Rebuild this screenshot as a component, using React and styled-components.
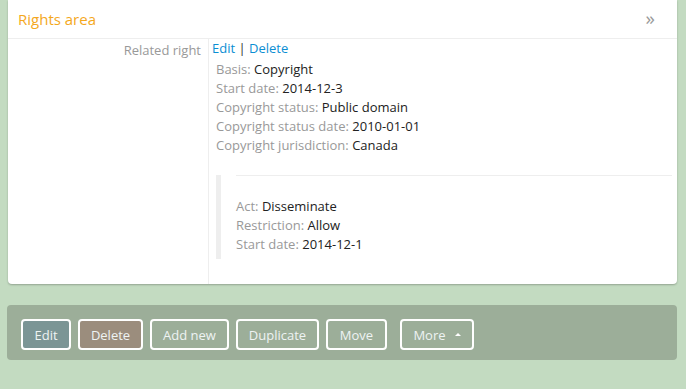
import React from "react";
import styled, { createGlobalStyle } from "styled-components";

const GlobalStyle = createGlobalStyle`
  html, body {
    margin: 0;
    padding: 0;
    background: #c3dbc1;
    font-family: "Open Sans", "Noto Sans", sans-serif;
    font-size: 13px;
  }
`;

const details = [
  ["Basis", "Copyright"],
  ["Start date", "2014-12-3"],
  ["Copyright status", "Public domain"],
  ["Copyright status date", "2010-01-01"],
  ["Copyright jurisdiction", "Canada"],
];

const grant = [
  ["Act", "Disseminate"],
  ["Restriction", "Allow"],
  ["Start date", "2014-12-1"],
];

const actions = [
  { label: "Edit", tone: "edit", width: 50 },
  { label: "Delete", tone: "delete", width: 65 },
  { label: "Add new", width: 79 },
  { label: "Duplicate", width: 83 },
  { label: "Move", width: 61 },
];

const App = () => {
  return (
    <Page>
      <GlobalStyle />
      <Card>
        <CardHeader>
          <Title>Rights area</Title>
          <Toggle>»</Toggle>
        </CardHeader>
        <FieldRow>
          <Label>Related right</Label>
          <Value>
            <Links>
              <Link>Edit</Link> | <Link>Delete</Link>
            </Links>
            <DetailList>
              {details.map(([k, v]) => (
                <Line key={k}>
                  <Key>{k}:</Key> {v}
                </Line>
              ))}
            </DetailList>
            <Quote>
              <Rule />
              {grant.map(([k, v]) => (
                <Line key={k}>
                  <Key>{k}:</Key> {v}
                </Line>
              ))}
            </Quote>
          </Value>
        </FieldRow>
      </Card>
      <ActionBar>
        {actions.map((a) => (
          <Button key={a.label} tone={a.tone} $w={a.width}>
            {a.label}
          </Button>
        ))}
        <MoreButton $w={74}>
          More <Caret />
        </MoreButton>
      </ActionBar>
    </Page>
  );
};

export default App;

const Page = styled.div`
  padding: 0 9px 0 7px;
`;

const Card = styled.section`
  margin-left: 1px;
  background: #fff;
  border-radius: 0 0 4px 4px;
  box-shadow: 0 1px 2px rgba(0, 0, 0, 0.25);
  color: #333;
`;

const CardHeader = styled.div`
  height: 39px;
  display: flex;
  align-items: center;
  justify-content: space-between;
  padding: 0 22px 0 10px;
  border-bottom: 1px solid #eee;
  box-sizing: border-box;
`;

const Title = styled.h3`
  margin: 0;
  font-size: 15px;
  font-weight: normal;
  color: #f4a81d;
`;

const Toggle = styled.span`
  font-size: 19px;
  color: #9a9a9a;
  line-height: 1;
  margin-top: -2px;
`;

const FieldRow = styled.div`
  display: grid;
  grid-template-columns: 201px 1fr;
`;

const Label = styled.div`
  border-right: 1px solid #eee;
  text-align: right;
  padding: 2px 7px 0 0;
  line-height: 19px;
  color: #999;
`;

const Value = styled.div`
  padding: 0 5px 25px 3px;
  line-height: 19px;
`;

const Links = styled.div`
  color: #333;
`;

const Link = styled.a`
  color: #0b8ed3;
  cursor: pointer;
`;

const DetailList = styled.div`
  margin-top: 2px;
  padding-left: 4px;
`;

const Line = styled.div`
  line-height: 19px;
  color: #222;
`;

const Key = styled.span`
  color: #999;
`;

const Quote = styled.blockquote`
  margin: 20px 0 0 4px;
  padding: 0 0 5px 15px;
  border-left: 5px solid #eee;
`;

const Rule = styled.hr`
  margin: 0 0 21px 0;
  border: 0;
  border-top: 1px solid #eee;
`;

const ActionBar = styled.div`
  margin-top: 21px;
  display: flex;
  align-items: flex-start;
  gap: 7px;
  height: 55px;
  padding: 14px 14px 0;
  background: #9cae99;
  border-radius: 4px;
  box-sizing: border-box;
`;

const toneColors = {
  edit: "#7b9595",
  delete: "#9b8d7d",
};

const Button = styled.button`
  width: ${(p) => p.$w}px;
  height: 31px;
  padding: 0;
  font-family: inherit;
  font-size: 13px;
  color: #eef3f3;
  background: ${(p) => toneColors[p.tone] || "transparent"};
  border: 2px solid #fff;
  border-radius: 4px;
  cursor: pointer;
`;

const MoreButton = styled(Button)`
  margin-left: 6px;
  display: flex;
  align-items: center;
  justify-content: center;
  gap: 9px;
`;

const Caret = styled.span`
  width: 0;
  height: 0;
  border-left: 3px solid transparent;
  border-right: 3px solid transparent;
  border-bottom: 3px solid #fff;
`;
